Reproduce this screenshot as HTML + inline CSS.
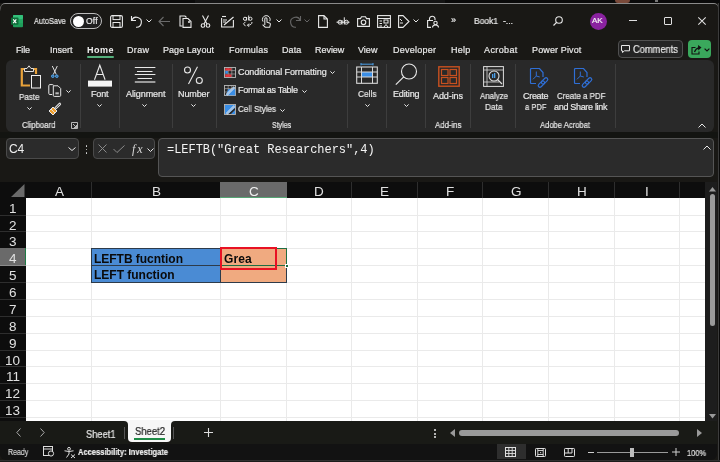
<!DOCTYPE html>
<html><head><meta charset="utf-8">
<style>
*{box-sizing:border-box;margin:0;padding:0}
html,body{width:720px;height:462px;overflow:hidden;background:#191815;font-family:"Liberation Sans",sans-serif;color:#e6e6e6;position:relative}
.a{position:absolute}
.t{position:absolute;white-space:nowrap;line-height:1;will-change:transform}
svg{position:absolute;overflow:visible}
</style></head><body>
<div class="a" style="left:0px;top:0px;width:720px;height:3px;background:#0a0a0a;"></div>
<div class="a" style="left:195px;top:0px;width:250px;height:3px;background:#141414;"></div>
<div class="a" style="left:615px;top:0px;width:15px;height:3px;background:#7a4a3a;border-radius:0 0 7px 7px"></div>
<div class="a" style="left:655px;top:0px;width:3px;height:2px;background:#777;"></div>
<div class="a" style="left:0px;top:132px;width:720px;height:6px;background:#131411;"></div>
<div class="a" style="left:0;top:3px;width:719px;height:12px;border-top:1px solid #8a8a8a;border-left:1px solid #6a6a6a;border-right:1px solid #6a6a6a;border-top-left-radius:5px;border-top-right-radius:5px;-webkit-mask-image:linear-gradient(#000 30%,transparent 70%)"></div>
<div class="a" style="left:718px;top:3px;width:1px;height:459px;background:#3c3c3c;"></div>
<div class="a" style="left:719px;top:0px;width:1px;height:462px;background:#0a0a0a;"></div>
<svg style="left:11px;top:14.5px" width="12" height="12.5" viewBox="0 0 12 12.5"><rect x="2" y="0" width="10" height="12.3" rx="1" fill="#1f9d5a"/>
<rect x="2" y="0" width="10" height="4" rx="1" fill="#33c07a"/>
<rect x="7" y="4" width="5" height="4.2" fill="#23a862"/>
<rect x="0" y="2.6" width="7.5" height="7.2" rx="0.8" fill="#0e6f3a"/>
<path d="M2.2 4.3 L5.3 8.1 M5.3 4.3 L2.2 8.1" stroke="#fff" stroke-width="1.1"/></svg>
<div class="a" style="left:70px;top:13px;width:32px;height:16px;border:1px solid #bdbdbd;border-radius:8px;background:#1f1f1f"></div>
<div class="a" style="left:72.5px;top:15.5px;width:11px;height:11px;border-radius:50%;background:#fff"></div>
<svg style="left:110px;top:15px" width="13" height="13" viewBox="0 0 13 13"><rect x="0.6" y="0.6" width="11.8" height="11.8" rx="1.5" fill="none" stroke="#e8e8e8" stroke-width="1.1"/><rect x="3" y="0.6" width="7" height="4" fill="none" stroke="#e8e8e8" stroke-width="1"/><rect x="3" y="7.5" width="7" height="5" fill="none" stroke="#e8e8e8" stroke-width="1"/></svg>
<svg style="left:130px;top:15px" width="13" height="13" viewBox="0 0 13 13"><path d="M1.5 1 V5.5 H6" fill="none" stroke="#e8e8e8" stroke-width="1.1"/><path d="M1.8 5.2 A5 5 0 1 1 6 12.2" fill="none" stroke="#e8e8e8" stroke-width="1.1"/></svg>
<svg style="left:146px;top:19px" width="6" height="4" viewBox="0 0 6 4"><path d="M0.5 0.5 L3 3 L5.5 0.5" fill="none" stroke="#e8e8e8" stroke-width="1"/></svg>
<svg style="left:158px;top:16px" width="13" height="11" viewBox="0 0 13 11"><path d="M12 5.5 H1 M5.5 1 L1 5.5 L5.5 10" fill="none" stroke="#6a6a6a" stroke-width="1.1"/></svg>
<svg style="left:179px;top:15px" width="13" height="13" viewBox="0 0 13 13"><path d="M3.5 11 H1 V1 H6 L7.5 2.5" fill="none" stroke="#e8e8e8" stroke-width="1.1"/><path d="M4 3.5 H9 L12 6.5 V12.4 H4 Z" fill="none" stroke="#e8e8e8" stroke-width="1.1"/><path d="M9 7 H11" stroke="#e8e8e8" stroke-width="1.4"/></svg>
<svg style="left:201px;top:15px" width="9" height="13" viewBox="0 0 9 13"><path d="M1.5 0.5 L6 9 M7.5 0.5 L3 9" fill="none" stroke="#e8e8e8" stroke-width="1.1"/><circle cx="2" cy="10.5" r="1.8" fill="none" stroke="#e8e8e8" stroke-width="1.1"/><circle cx="7" cy="10.5" r="1.8" fill="none" stroke="#e8e8e8" stroke-width="1.1"/></svg>
<svg style="left:221px;top:15px" width="13" height="13" viewBox="0 0 13 13"><path d="M0.6 3 V12 H12.4 V5" fill="none" stroke="#e8e8e8" stroke-width="1.1"/><path d="M2 5 H6 M2 7 H5 M3 10 L12.5 2" fill="none" stroke="#e8e8e8" stroke-width="1.1"/><path d="M1 1.5 H5" stroke="#e8e8e8" stroke-width="1.1"/></svg>
<svg style="left:236px;top:10px" width="20" height="20" viewBox="0 0 20 20"><g fill="none" stroke="#e8e8e8" stroke-width="1"><circle cx="9" cy="8.8" r="1.6"/><path d="M10.6 7 V10.5"/><path d="M12.7 5.5 V10.5"/><circle cx="14.4" cy="8.8" r="1.6"/><path d="M9.5 11.8 L7.5 13.8 L9.5 16.2"/><path d="M16 12 Q16 15.2 11.5 15.2 M13 13.6 L11.5 15.2 L13 16.8"/></g></svg>
<svg style="left:260px;top:14px" width="12" height="14" viewBox="0 0 12 14"><path d="M4.8 11 V4.8 A1.1 1.1 0 0 1 7 4.8 V8.2 L9.4 8.9 A1.4 1.4 0 0 1 10.4 10.5 L9.7 13.2 H5.2 L2.6 10.6" fill="none" stroke="#e8e8e8" stroke-width="1.05"/><path d="M3 7.6 A3.9 3.9 0 1 1 9.8 7.2" fill="none" stroke="#e8e8e8" stroke-width="1"/></svg>
<svg style="left:276px;top:19px" width="6" height="4" viewBox="0 0 6 4"><path d="M0.5 0.5 L3 3 L5.5 0.5" fill="none" stroke="#e8e8e8" stroke-width="1"/></svg>
<svg style="left:290px;top:15px" width="12" height="13" viewBox="0 0 12 13"><path d="M10.5 1 V5.5 H6" fill="none" stroke="#666" stroke-width="1.1"/><path d="M10.2 5.2 A5 5 0 1 0 6 12.2" fill="none" stroke="#666" stroke-width="1.1"/></svg>
<svg style="left:304px;top:19px" width="6" height="4" viewBox="0 0 6 4"><path d="M0.5 0.5 L3 3 L5.5 0.5" fill="none" stroke="#666" stroke-width="1"/></svg>
<svg style="left:318px;top:15px" width="10" height="13" viewBox="0 0 10 13"><path d="M0.6 0.6 H6 L9.4 4 V12.4 H0.6 Z M6 0.6 V4 H9.4" fill="none" stroke="#e8e8e8" stroke-width="1.1"/></svg>
<svg style="left:330px;top:10px" width="22" height="20" viewBox="0 0 22 20"><g fill="none" stroke="#e8e8e8" stroke-width="1"><circle cx="10" cy="12.2" r="2"/><path d="M12 10 V14.5"/><path d="M14.3 7.3 V14.5"/><circle cx="16.3" cy="12.2" r="2"/><path d="M6.5 12.2 H19.5"/></g></svg>
<svg style="left:357px;top:16px" width="13" height="11" viewBox="0 0 13 11"><path d="M0.6 2.6 H3.5 L4.5 0.8 H8.5 L9.5 2.6 H12.4 V10.4 H0.6 Z" fill="none" stroke="#e8e8e8" stroke-width="1.1"/><circle cx="6.5" cy="6.3" r="2.3" fill="none" stroke="#e8e8e8" stroke-width="1.1"/></svg>
<svg style="left:377px;top:15px" width="14" height="13" viewBox="0 0 14 13"><rect x="0.6" y="0.6" width="12.8" height="11.8" fill="none" stroke="#e8e8e8" stroke-width="1.1"/><path d="M0.6 3.5 H13.4 M2.5 6 H5 M2.5 8.5 H5 M2.5 11 H5" stroke="#e8e8e8" stroke-width="1"/><rect x="7" y="5" width="4" height="3" fill="none" stroke="#e8e8e8" stroke-width="1"/><path d="M7 12 L9 9.5 L11 12" fill="none" stroke="#e8e8e8" stroke-width="1"/></svg>
<svg style="left:398px;top:15px" width="12" height="13" viewBox="0 0 12 13"><path d="M0.6 0.6 H5 L11 6.5 L5 12.4 H0.6 Z" fill="none" stroke="#e8e8e8" stroke-width="1.1"/><path d="M2 4 L4 6 M2 8 H5" stroke="#e8e8e8" stroke-width="1"/></svg>
<svg style="left:413px;top:19px" width="6" height="4" viewBox="0 0 6 4"><path d="M0.5 0.5 L3 3 L5.5 0.5" fill="none" stroke="#e8e8e8" stroke-width="1"/></svg>
<svg style="left:427px;top:15px" width="12" height="13" viewBox="0 0 12 13"><path d="M2.5 5 V3.5 A2.8 2.8 0 0 1 8 3.5 V5" fill="none" stroke="#e8e8e8" stroke-width="1.1"/><path d="M4 12.4 H0.6 V5.5 H6" fill="none" stroke="#e8e8e8" stroke-width="1.1"/><circle cx="8.5" cy="8" r="1.7" fill="none" stroke="#e8e8e8" stroke-width="1.1"/><path d="M5.5 12.5 A3 2.5 0 0 1 11.5 12.5" fill="none" stroke="#e8e8e8" stroke-width="1.1"/></svg>
<svg style="left:553px;top:16px" width="10" height="10" viewBox="0 0 10 10"><circle cx="6" cy="4" r="3.3" fill="none" stroke="#e8e8e8" stroke-width="1.1"/><path d="M3.6 6.4 L0.5 9.5" stroke="#e8e8e8" stroke-width="1.2"/></svg>
<div class="a" style="left:589.5px;top:12.5px;width:17.5px;height:17.5px;border-radius:50%;background:#8a22a0"></div>
<div class="a" style="left:629px;top:20px;width:8px;height:1px;background:#e0e0e0;"></div>
<div class="a" style="left:664px;top:17px;width:7.5px;height:7.5px;border:1px solid #e0e0e0;border-radius:1px"></div>
<svg style="left:698px;top:17px" width="8" height="8" viewBox="0 0 8 8"><path d="M0.3 0.3 L7.7 7.7 M7.7 0.3 L0.3 7.7" stroke="#e0e0e0" stroke-width="1.05"/></svg>
<div class="a" style="left:87px;top:56px;width:27px;height:2px;background:#55b07c;border-radius:1px"></div>
<div class="a" style="left:617.5px;top:40px;width:65px;height:18px;border:1px solid #505050;border-radius:4px;background:#242424"></div>
<svg style="left:621px;top:45px" width="9" height="8" viewBox="0 0 9 8"><path d="M0.5 0.5 H8.5 V5.8 H3.5 L1.5 7.5 V5.8 H0.5 Z" fill="none" stroke="#e8e8e8" stroke-width="1"/></svg>
<div class="a" style="left:688px;top:40px;width:23px;height:18px;border-radius:4px;background:#3aa85c"></div>
<svg style="left:691px;top:43px" width="12" height="12" viewBox="0 0 12 12"><path d="M4.5 4.5 H1 V11 H8 V8.5" fill="none" stroke="#111" stroke-width="1.1"/><path d="M3.5 9 Q4.5 5.5 8 4.8" fill="none" stroke="#111" stroke-width="1.2"/><path d="M7 2 L10.5 4.6 L7.3 7.6 Z" fill="#111"/></svg>
<svg style="left:704px;top:48px" width="6" height="4" viewBox="0 0 6 4"><path d="M0.6 0.6 L3 3 L5.4 0.6" fill="none" stroke="#111" stroke-width="1.2"/></svg>
<div class="a" style="left:6px;top:60px;width:708px;height:72px;background:#292929;border-radius:6px"></div>
<div class="a" style="left:80px;top:64px;width:1px;height:64px;background:#3d3d3d;"></div>
<div class="a" style="left:119px;top:64px;width:1px;height:64px;background:#3d3d3d;"></div>
<div class="a" style="left:172px;top:64px;width:1px;height:64px;background:#3d3d3d;"></div>
<div class="a" style="left:216px;top:64px;width:1px;height:64px;background:#3d3d3d;"></div>
<div class="a" style="left:347px;top:64px;width:1px;height:64px;background:#3d3d3d;"></div>
<div class="a" style="left:386px;top:64px;width:1px;height:64px;background:#3d3d3d;"></div>
<div class="a" style="left:425px;top:64px;width:1px;height:64px;background:#3d3d3d;"></div>
<div class="a" style="left:470px;top:64px;width:1px;height:64px;background:#3d3d3d;"></div>
<div class="a" style="left:515px;top:64px;width:1px;height:64px;background:#3d3d3d;"></div>
<div class="a" style="left:615px;top:64px;width:1px;height:64px;background:#3d3d3d;"></div>
<svg style="left:20px;top:65px" width="22" height="24" viewBox="0 0 22 24"><path d="M6 4 H1.8 V20.5 H10 M12 4 H16 V9" fill="none" stroke="#e8a23a" stroke-width="2.2"/>
<path d="M4.5 6.5 V3.5 H7 L9 0.8 L11 3.5 H13.5 V6.5 Z" fill="#292929" stroke="#e0e0e0" stroke-width="1"/>
<rect x="11.5" y="10.5" width="9" height="12.5" fill="#292929" stroke="#f0f0f0" stroke-width="1"/></svg>
<svg style="left:27px;top:106.5px" width="5" height="3" viewBox="0 0 5 3"><path d="M0.4 0.4 L2.5 2.5 L4.6 0.4" fill="none" stroke="#e8e8e8" stroke-width="1"/></svg>
<svg style="left:50px;top:65px" width="10" height="13" viewBox="0 0 10 13"><path d="M2.3 1 L6.3 9.5 M7.3 1 L3.3 9.5" stroke="#e0e0e0" stroke-width="1"/><circle cx="2.8" cy="11.2" r="1.3" fill="#4ca0e8" stroke="#4ca0e8" stroke-width="1"/><circle cx="6.8" cy="11.2" r="1.3" fill="#4ca0e8" stroke="#4ca0e8" stroke-width="1"/><circle cx="2.8" cy="11.2" r="0.5" fill="#292929"/><circle cx="6.8" cy="11.2" r="0.5" fill="#292929"/></svg>
<svg style="left:48px;top:84px" width="14" height="13" viewBox="0 0 14 13"><path d="M4.2 10.5 H1.8 Q0.8 10.5 0.8 9.5 V1.6 Q0.8 0.6 1.8 0.6 H4.5 Q5.4 0.6 5.4 1.4" fill="none" stroke="#e8e8e8" stroke-width="1"/><path d="M5.3 1.8 H10 L12.7 4.5 V11.4 Q12.7 12.4 11.7 12.4 H6.3 Q5.3 12.4 5.3 11.4 Z" fill="none" stroke="#e8e8e8" stroke-width="1"/><rect x="7.4" y="8.3" width="3.4" height="2" fill="#bbb"/></svg>
<svg style="left:65.5px;top:89.5px" width="5" height="3" viewBox="0 0 5 3"><path d="M0.4 0.4 L2.5 2.5 L4.6 0.4" fill="none" stroke="#e8e8e8" stroke-width="1"/></svg>
<svg style="left:48px;top:102px" width="13" height="13" viewBox="0 0 13 13"><path d="M7.6 6.2 L11.8 2" stroke="#e8e8e8" stroke-width="2.6" stroke-linecap="round"/><path d="M7.6 6.2 L11.8 2" stroke="#292929" stroke-width="0.9" stroke-linecap="round"/><path d="M1 9 L5 5 L9 9 L5 13 Z" fill="#f0a030" stroke="#e8e8e8" stroke-width="1" stroke-linejoin="round"/><path d="M3 7 L7 11" stroke="#e8e8e8" stroke-width="0.9"/><path d="M1 9 L3 7 L7 11 L5 13 Z" fill="#292929" opacity="0.0"/></svg>
<svg style="left:71px;top:122px" width="7" height="7" viewBox="0 0 7 7"><path d="M0.5 6.5 V0.5 H6.5 V6.5 Z" fill="none" stroke="#ccc" stroke-width="0.9"/><path d="M2 2 L5.5 5.5 M3 5.5 H5.5 V3" fill="none" stroke="#ccc" stroke-width="0.9"/></svg>
<svg style="left:87px;top:64px" width="26" height="23" viewBox="0 0 26 23"><path d="M7.5 15.8 L12.8 1.2 L18.1 15.8 M9.2 10.5 H16.4" fill="none" stroke="#e8e8e8" stroke-width="1.1"/><rect x="1" y="16.6" width="24" height="6" fill="#f4f4f4"/></svg>
<svg style="left:97px;top:104px" width="5" height="3" viewBox="0 0 5 3"><path d="M0.4 0.4 L2.5 2.5 L4.6 0.4" fill="none" stroke="#e8e8e8" stroke-width="1"/></svg>
<svg style="left:134px;top:66px" width="22" height="17" viewBox="0 0 22 17"><path d="M0.8 1.5 H21.4 M3 5.5 H18.5 M0.8 8.5 H21.4 M3.5 12.5 H18 " stroke="#e8e8e8" stroke-width="1"/><path d="M0.8 16 H21.4" stroke="#9a9a9a" stroke-width="2"/></svg>
<svg style="left:142px;top:104px" width="5" height="3" viewBox="0 0 5 3"><path d="M0.4 0.4 L2.5 2.5 L4.6 0.4" fill="none" stroke="#e8e8e8" stroke-width="1"/></svg>
<svg style="left:183px;top:66px" width="21" height="19" viewBox="0 0 21 19"><circle cx="4.5" cy="4" r="3" fill="none" stroke="#e8e8e8" stroke-width="1.1"/><circle cx="16.3" cy="14.5" r="3" fill="none" stroke="#e8e8e8" stroke-width="1.1"/><path d="M14.5 0.8 L5.5 18" stroke="#e8e8e8" stroke-width="1.1"/></svg>
<svg style="left:190.5px;top:104px" width="5" height="3" viewBox="0 0 5 3"><path d="M0.4 0.4 L2.5 2.5 L4.6 0.4" fill="none" stroke="#e8e8e8" stroke-width="1"/></svg>
<svg style="left:224px;top:66.5px" width="12" height="11" viewBox="0 0 12 11"><rect x="0.5" y="0.5" width="11" height="10" fill="none" stroke="#b8b8b8" stroke-width="0.9"/><path d="M4.2 0.5 V10.5 M7.8 0.5 V10.5 M0.5 3.6 H11.5 M0.5 7 H11.5" stroke="#b8b8b8" stroke-width="0.6"/><rect x="1.2" y="1.2" width="6.2" height="2.2" fill="#e8333a"/><rect x="1.2" y="4" width="2.7" height="2.6" fill="#3a8ee6"/><rect x="1.2" y="7.4" width="6.2" height="2.5" fill="#e8333a"/></svg>
<svg style="left:330px;top:71px" width="5" height="3" viewBox="0 0 5 3"><path d="M0.4 0.4 L2.5 2.5 L4.6 0.4" fill="none" stroke="#e8e8e8" stroke-width="1"/></svg>
<svg style="left:224px;top:85px" width="12" height="11" viewBox="0 0 12 11"><rect x="0.5" y="0.5" width="11" height="10" fill="none" stroke="#b8b8b8" stroke-width="0.9"/><path d="M4.2 0.5 V10.5 M7.8 0.5 V10.5 M0.5 3.6 H11.5 M0.5 7 H11.5" stroke="#b8b8b8" stroke-width="0.6"/><path d="M4.2 4 H11.2 V10.2 H2 Z" fill="#3a8ee6"/><path d="M2.5 10 L10.5 2" stroke="#e8e8e8" stroke-width="2.2"/><path d="M2.5 10 L10.5 2" stroke="#3a8ee6" stroke-width="0.8"/></svg>
<svg style="left:301.5px;top:89.5px" width="5" height="3" viewBox="0 0 5 3"><path d="M0.4 0.4 L2.5 2.5 L4.6 0.4" fill="none" stroke="#e8e8e8" stroke-width="1"/></svg>
<svg style="left:224px;top:104px" width="12" height="11" viewBox="0 0 12 11"><rect x="0.5" y="0.5" width="11" height="10" fill="none" stroke="#b8b8b8" stroke-width="0.9"/><path d="M1 1 H11 V4 L4 10 H1 Z" fill="#3a8ee6"/><path d="M7 10 L11 6 V10 Z" fill="#3a8ee6"/><path d="M2.5 10 L10.5 2" stroke="#e8e8e8" stroke-width="2.2"/><path d="M2.5 10 L10.5 2" stroke="#3a8ee6" stroke-width="0.8"/></svg>
<svg style="left:279.5px;top:108.5px" width="5" height="3" viewBox="0 0 5 3"><path d="M0.4 0.4 L2.5 2.5 L4.6 0.4" fill="none" stroke="#e8e8e8" stroke-width="1"/></svg>
<svg style="left:356px;top:63px" width="22" height="21" viewBox="0 0 22 21"><path d="M5 1.2 H17 M5 0 V2.4 M17 0 V2.4" stroke="#4ca0e8" stroke-width="1"/><rect x="5.5" y="9" width="11" height="5" fill="#3a8ee6"/><rect x="0.7" y="4" width="20.6" height="16.3" fill="none" stroke="#d8d8d8" stroke-width="1.1"/><path d="M0.7 9 H21.3 M0.7 14 H21.3 M5.5 4 V20.3 M16.5 4 V20.3" stroke="#d8d8d8" stroke-width="1"/></svg>
<svg style="left:365px;top:104px" width="5" height="3" viewBox="0 0 5 3"><path d="M0.4 0.4 L2.5 2.5 L4.6 0.4" fill="none" stroke="#e8e8e8" stroke-width="1"/></svg>
<svg style="left:395px;top:63px" width="23" height="23" viewBox="0 0 23 23"><circle cx="14" cy="8.5" r="7.5" fill="none" stroke="#e8e8e8" stroke-width="1.1"/><path d="M8.7 13.8 L0.8 21.7" stroke="#e8e8e8" stroke-width="1.2"/></svg>
<svg style="left:403.5px;top:104px" width="5" height="3" viewBox="0 0 5 3"><path d="M0.4 0.4 L2.5 2.5 L4.6 0.4" fill="none" stroke="#e8e8e8" stroke-width="1"/></svg>
<svg style="left:438px;top:66px" width="22" height="21" viewBox="0 0 22 21"><rect x="0.8" y="0.8" width="20.4" height="19.4" fill="none" stroke="#c8501f" stroke-width="1.4"/><rect x="3.5" y="3.5" width="6.5" height="6" fill="none" stroke="#c8501f" stroke-width="1.2"/><rect x="12" y="3.5" width="6.5" height="6" fill="none" stroke="#c8501f" stroke-width="1.2"/><rect x="3.5" y="11.5" width="6.5" height="6" fill="none" stroke="#c8501f" stroke-width="1.2"/><rect x="12" y="11.5" width="6.5" height="6" fill="none" stroke="#c8501f" stroke-width="1.2"/></svg>
<svg style="left:483px;top:66px" width="21" height="21" viewBox="0 0 21 21"><rect x="0.6" y="0.6" width="19.8" height="19.8" fill="none" stroke="#ddd" stroke-width="1"/><path d="M0.6 4 H20.4 M4 0.6 V20.4 M0.6 16 H16" stroke="#ddd" stroke-width="0.8"/><circle cx="11" cy="10" r="5" fill="none" stroke="#ddd" stroke-width="1.1"/><rect x="9" y="8" width="1.3" height="4" fill="#4ca0e8"/><rect x="11" y="7" width="1.3" height="5" fill="#4ca0e8"/><path d="M14.5 13.5 L19 18" stroke="#ddd" stroke-width="1.3"/></svg>
<svg style="left:529px;top:68px" width="22" height="22" viewBox="0 0 22 22"><path d="M7 15.5 H2.5 Q1.5 15.5 1.5 14.5 V1.5 Q1.5 0.5 2.5 0.5 H10.5 L14 4.5 V9" fill="none" stroke="#2f6fd6" stroke-width="1.2"/><path d="M7.3 3.5 V8 L4 11.3 M7.3 8 L10.8 9" fill="none" stroke="#2f6fd6" stroke-width="1"/><g transform="rotate(-45 14 14.5)" fill="none" stroke="#2f6fd6" stroke-width="1.2"><rect x="8" y="12.8" width="7.5" height="3.4" rx="1.7"/><rect x="12.5" y="12.8" width="7.5" height="3.4" rx="1.7"/></g></svg>
<svg style="left:573px;top:68px" width="22" height="22" viewBox="0 0 22 22"><path d="M7 15.5 H2.5 Q1.5 15.5 1.5 14.5 V1.5 Q1.5 0.5 2.5 0.5 H10.5 L14 4.5 V9" fill="none" stroke="#2f6fd6" stroke-width="1.2"/><path d="M7.3 3.5 V8 L4 11.3 M7.3 8 L10.8 9" fill="none" stroke="#2f6fd6" stroke-width="1"/><g transform="rotate(-45 14 14.5)" fill="none" stroke="#2f6fd6" stroke-width="1.2"><rect x="8" y="12.8" width="7.5" height="3.4" rx="1.7"/><rect x="12.5" y="12.8" width="7.5" height="3.4" rx="1.7"/></g></svg>
<svg style="left:698px;top:123px" width="8" height="5" viewBox="0 0 8 5"><path d="M0.5 4.5 L4 1 L7.5 4.5" fill="none" stroke="#e8e8e8" stroke-width="1"/></svg>
<div class="a" style="left:6px;top:138px;width:73px;height:21px;background:#2b2b2b;border:1px solid #4a4a4a;border-radius:4px"></div>
<svg style="left:67.5px;top:147px" width="8" height="4" viewBox="0 0 8 4"><path d="M0.5 0.5 L4 3.5 L7.5 0.5" fill="none" stroke="#e8e8e8" stroke-width="1"/></svg>
<div class="a" style="left:85.5px;top:145px;width:1.6px;height:1.6px;background:#dcdcdc;border-radius:50%"></div>
<div class="a" style="left:85.5px;top:148.5px;width:1.6px;height:1.6px;background:#dcdcdc;border-radius:50%"></div>
<div class="a" style="left:85.5px;top:152px;width:1.6px;height:1.6px;background:#dcdcdc;border-radius:50%"></div>
<div class="a" style="left:93px;top:138px;width:62px;height:21px;background:#2b2b2b;border:1px solid #4a4a4a;border-radius:4px"></div>
<svg style="left:98px;top:144px" width="9" height="9" viewBox="0 0 9 9"><path d="M0.5 0.5 L8.5 8.5 M8.5 0.5 L0.5 8.5" stroke="#8a8a8a" stroke-width="1"/></svg>
<svg style="left:113px;top:145px" width="12" height="8" viewBox="0 0 12 8"><path d="M0.5 4 L4 7.5 L11.5 0.5" fill="none" stroke="#8a8a8a" stroke-width="1"/></svg>
<svg style="left:147px;top:147.5px" width="7" height="4" viewBox="0 0 7 4"><path d="M0.5 0.5 L3.5 3.5 L6.5 0.5" fill="none" stroke="#e8e8e8" stroke-width="1"/></svg>
<div class="a" style="left:158px;top:138px;width:556px;height:39px;background:#2b2b2b;border:1px solid #555;border-radius:4px"></div>
<svg style="left:703px;top:145px" width="8" height="5" viewBox="0 0 8 5"><path d="M0.5 4.5 L4 1 L7.5 4.5" fill="none" stroke="#e8e8e8" stroke-width="1"/></svg>
<div class="a" style="left:0px;top:182px;width:705px;height:16px;background:#0d0d0d;"></div>
<div class="a" style="left:705px;top:182px;width:12px;height:239px;background:#1d1d1d;"></div>
<div class="a" style="left:0px;top:198px;width:26px;height:223px;background:#0d0d0d;"></div>
<div class="a" style="left:26px;top:197.5px;width:679px;height:223.5px;background:#ffffff;"></div>
<svg style="left:11px;top:184px" width="14" height="13" viewBox="0 0 14 13"><path d="M13.5 0 V13 H0 Z" fill="#6a6a6a"/></svg>
<div class="a" style="left:91px;top:182px;width:1px;height:16px;background:#2e2e2e;"></div>
<div class="a" style="left:220px;top:182px;width:1px;height:16px;background:#2e2e2e;"></div>
<div class="a" style="left:286px;top:182px;width:1px;height:16px;background:#2e2e2e;"></div>
<div class="a" style="left:351px;top:182px;width:1px;height:16px;background:#2e2e2e;"></div>
<div class="a" style="left:417px;top:182px;width:1px;height:16px;background:#2e2e2e;"></div>
<div class="a" style="left:482px;top:182px;width:1px;height:16px;background:#2e2e2e;"></div>
<div class="a" style="left:548px;top:182px;width:1px;height:16px;background:#2e2e2e;"></div>
<div class="a" style="left:614px;top:182px;width:1px;height:16px;background:#2e2e2e;"></div>
<div class="a" style="left:679px;top:182px;width:1px;height:16px;background:#2e2e2e;"></div>
<div class="a" style="left:0px;top:215px;width:26px;height:1px;background:#2e2e2e;"></div>
<div class="a" style="left:0px;top:231px;width:26px;height:1px;background:#2e2e2e;"></div>
<div class="a" style="left:0px;top:248px;width:26px;height:1px;background:#2e2e2e;"></div>
<div class="a" style="left:0px;top:265px;width:26px;height:1px;background:#2e2e2e;"></div>
<div class="a" style="left:0px;top:282px;width:26px;height:1px;background:#2e2e2e;"></div>
<div class="a" style="left:0px;top:299px;width:26px;height:1px;background:#2e2e2e;"></div>
<div class="a" style="left:0px;top:316px;width:26px;height:1px;background:#2e2e2e;"></div>
<div class="a" style="left:0px;top:333px;width:26px;height:1px;background:#2e2e2e;"></div>
<div class="a" style="left:0px;top:350px;width:26px;height:1px;background:#2e2e2e;"></div>
<div class="a" style="left:0px;top:366px;width:26px;height:1px;background:#2e2e2e;"></div>
<div class="a" style="left:0px;top:383px;width:26px;height:1px;background:#2e2e2e;"></div>
<div class="a" style="left:0px;top:400px;width:26px;height:1px;background:#2e2e2e;"></div>
<div class="a" style="left:0px;top:417px;width:26px;height:1px;background:#2e2e2e;"></div>
<div class="a" style="left:91px;top:198px;width:1px;height:223px;background:#eaeaea;"></div>
<div class="a" style="left:220px;top:198px;width:1px;height:223px;background:#eaeaea;"></div>
<div class="a" style="left:286px;top:198px;width:1px;height:223px;background:#eaeaea;"></div>
<div class="a" style="left:351px;top:198px;width:1px;height:223px;background:#eaeaea;"></div>
<div class="a" style="left:417px;top:198px;width:1px;height:223px;background:#eaeaea;"></div>
<div class="a" style="left:482px;top:198px;width:1px;height:223px;background:#eaeaea;"></div>
<div class="a" style="left:548px;top:198px;width:1px;height:223px;background:#eaeaea;"></div>
<div class="a" style="left:614px;top:198px;width:1px;height:223px;background:#eaeaea;"></div>
<div class="a" style="left:679px;top:198px;width:1px;height:223px;background:#eaeaea;"></div>
<div class="a" style="left:26px;top:215px;width:679px;height:1px;background:#eaeaea;"></div>
<div class="a" style="left:26px;top:231px;width:679px;height:1px;background:#eaeaea;"></div>
<div class="a" style="left:26px;top:248px;width:679px;height:1px;background:#eaeaea;"></div>
<div class="a" style="left:26px;top:265px;width:679px;height:1px;background:#eaeaea;"></div>
<div class="a" style="left:26px;top:282px;width:679px;height:1px;background:#eaeaea;"></div>
<div class="a" style="left:26px;top:299px;width:679px;height:1px;background:#eaeaea;"></div>
<div class="a" style="left:26px;top:316px;width:679px;height:1px;background:#eaeaea;"></div>
<div class="a" style="left:26px;top:333px;width:679px;height:1px;background:#eaeaea;"></div>
<div class="a" style="left:26px;top:350px;width:679px;height:1px;background:#eaeaea;"></div>
<div class="a" style="left:26px;top:366px;width:679px;height:1px;background:#eaeaea;"></div>
<div class="a" style="left:26px;top:383px;width:679px;height:1px;background:#eaeaea;"></div>
<div class="a" style="left:26px;top:400px;width:679px;height:1px;background:#eaeaea;"></div>
<div class="a" style="left:26px;top:417px;width:679px;height:1px;background:#eaeaea;"></div>
<div class="a" style="left:220px;top:182px;width:66.5px;height:16px;background:#6a6a6a;"></div>
<div class="a" style="left:220px;top:196.5px;width:66.5px;height:1.5px;background:#56a474;"></div>
<div class="a" style="left:0px;top:248px;width:26px;height:17px;background:#6a6a6a;"></div>
<div class="a" style="left:0px;top:264.5px;width:26px;height:1px;background:#8a8a8a;"></div>
<div class="a" style="left:24.5px;top:248px;width:1.5px;height:17px;background:#1e7a45;"></div>
<div class="a" style="left:92px;top:248px;width:128px;height:34px;background:#4a8bd4;"></div>
<div class="a" style="left:220px;top:248px;width:66px;height:34px;background:#f0aa80;"></div>
<div class="a" style="left:91px;top:248px;width:196px;height:35px;border:1px solid #2d3b4a"></div>
<div class="a" style="left:91px;top:265px;width:196px;height:1px;background:#2d3b4a;"></div>
<div class="a" style="left:220px;top:248px;width:1px;height:35px;background:#2d3b4a;"></div>
<div class="a" style="left:220px;top:248px;width:67px;height:18px;border:1.5px solid #1f6e43"></div>
<div class="a" style="left:284.5px;top:263.5px;width:4px;height:4px;background:#1f6e43;border:1px solid #fff"></div>
<div class="a" style="left:220px;top:246.5px;width:57px;height:23px;border:2px solid #e81123"></div>
<svg style="left:709px;top:187px" width="7" height="5" viewBox="0 0 7 5"><path d="M3.5 0 L7 4.5 H0 Z" fill="#9a9a9a"/></svg>
<div class="a" style="left:709.5px;top:194px;width:5.5px;height:132px;background:#9a9a9a;border-radius:3px"></div>
<svg style="left:709px;top:414px" width="7" height="5" viewBox="0 0 7 5"><path d="M0 0 H7 L3.5 4.5 Z" fill="#9a9a9a"/></svg>
<div class="a" style="left:120px;top:420px;width:60px;height:6px;background:#f7f7f7;"></div>
<div class="a" style="left:0px;top:421px;width:127.5px;height:23px;background:#191a16;border-top-right-radius:4px"></div>
<div class="a" style="left:171px;top:421px;width:546px;height:23px;background:#191a16;border-top-left-radius:4px"></div>
<svg style="left:16px;top:428px" width="5" height="9" viewBox="0 0 5 9"><path d="M4.5 0.5 L0.8 4.5 L4.5 8.5" fill="none" stroke="#aaa" stroke-width="1"/></svg>
<svg style="left:40px;top:428px" width="5" height="9" viewBox="0 0 5 9"><path d="M0.5 0.5 L4.2 4.5 L0.5 8.5" fill="none" stroke="#aaa" stroke-width="1"/></svg>
<div class="a" style="left:124px;top:427px;width:1px;height:12px;background:#555;"></div>
<div class="a" style="left:127.5px;top:421px;width:43.5px;height:21px;background:#f7f7f7;border-bottom-left-radius:4px;border-bottom-right-radius:4px"></div>
<div class="a" style="left:134px;top:438px;width:31px;height:2px;background:#1e8a46;"></div>
<div class="a" style="left:173px;top:427px;width:1px;height:12px;background:#555;"></div>
<svg style="left:204px;top:428px" width="9" height="9" viewBox="0 0 9 9"><path d="M4.5 0 V9 M0 4.5 H9" stroke="#ddd" stroke-width="1.1"/></svg>
<div class="a" style="left:433.5px;top:429px;width:2px;height:2px;background:#e8e8e8;border-radius:50%"></div>
<div class="a" style="left:433.5px;top:432.5px;width:2px;height:2px;background:#e8e8e8;border-radius:50%"></div>
<div class="a" style="left:433.5px;top:436px;width:2px;height:2px;background:#e8e8e8;border-radius:50%"></div>
<svg style="left:450px;top:428.5px" width="5" height="8" viewBox="0 0 5 8"><path d="M5 0 V8 L0 4 Z" fill="#9a9a9a"/></svg>
<div class="a" style="left:458.5px;top:429.8px;width:220px;height:6px;background:#9a9a9a;border-radius:3px"></div>
<svg style="left:697px;top:428.5px" width="5" height="8" viewBox="0 0 5 8"><path d="M0 0 V8 L5 4 Z" fill="#9a9a9a"/></svg>
<div class="a" style="left:0px;top:444px;width:717px;height:16px;background:#121212;border-bottom-left-radius:6px;border-bottom-right-radius:6px"></div>
<div class="a" style="left:0px;top:460px;width:720px;height:1px;background:#303030;"></div>
<div class="a" style="left:0px;top:461px;width:720px;height:1px;background:#1c1c1c;"></div>
<svg style="left:43px;top:446px" width="12" height="11" viewBox="0 0 12 11"><rect x="0.5" y="0.5" width="9" height="9" fill="none" stroke="#ddd" stroke-width="1"/><path d="M0.5 3 H9.5" stroke="#ddd" stroke-width="1"/><circle cx="8" cy="7.5" r="2.6" fill="#141414" stroke="#ddd" stroke-width="1"/></svg>
<svg style="left:64px;top:447px" width="12" height="11" viewBox="0 0 12 11"><circle cx="5" cy="1.8" r="1.4" fill="none" stroke="#ddd" stroke-width="1"/><path d="M0.5 3.8 Q5 5.2 9.5 3.8 M5 4.6 V7 L2.5 10.5" fill="none" stroke="#ddd" stroke-width="1"/><path d="M7 7.5 L11 11 M11 7.5 L7 11" stroke="#ddd" stroke-width="1"/></svg>
<div class="a" style="left:497px;top:444px;width:29px;height:15px;background:#2e2e2e;"></div>
<svg style="left:505px;top:447px" width="11" height="10" viewBox="0 0 11 10"><rect x="0.5" y="0.5" width="10" height="9" fill="none" stroke="#e0e0e0" stroke-width="1"/><path d="M0.5 3.5 H10.5 M0.5 6.5 H10.5 M3.8 0.5 V9.5 M7.2 0.5 V9.5" stroke="#e0e0e0" stroke-width="0.9"/></svg>
<svg style="left:535px;top:448px" width="11" height="9" viewBox="0 0 11 9"><rect x="0.5" y="0.5" width="10" height="8" rx="0.8" fill="none" stroke="#e0e0e0" stroke-width="1"/><path d="M2.8 0.5 V8.5 M8.2 0.5 V8.5 M2.8 2.5 H8.2 M2.8 6.5 H8.2" stroke="#e0e0e0" stroke-width="0.9"/><rect x="5" y="4" width="1.2" height="1.2" fill="#bbb"/></svg>
<svg style="left:564px;top:448px" width="11" height="9" viewBox="0 0 11 9"><rect x="0.5" y="0.5" width="10" height="8" rx="0.8" fill="none" stroke="#e0e0e0" stroke-width="1"/><path d="M0.5 5 H8 V0.5 M4.2 0.5 V5" fill="none" stroke="#e0e0e0" stroke-width="1"/></svg>
<div class="a" style="left:588px;top:451.5px;width:6px;height:1px;background:#cfcfcf;"></div>
<div class="a" style="left:597px;top:451.5px;width:71px;height:1.2px;background:#9a9a9a;"></div>
<div class="a" style="left:630px;top:447.5px;width:4px;height:9px;background:#bdbdbd;"></div>
<svg style="left:671.5px;top:448px" width="8" height="8" viewBox="0 0 8 8"><path d="M4 0 V8 M0 4 H8" stroke="#cfcfcf" stroke-width="1"/></svg>
<div class="t" id="t0" style="left:34px;top:17px;font-size:8.5px;font-weight:400;color:#eaeaea;font-family:'Liberation Sans',sans-serif;transform:scaleX(0.8569);transform-origin:0 0;-webkit-text-stroke:0.2px #eaeaea;">AutoSave</div>
<div class="t" id="t1" style="left:86px;top:17px;font-size:8.5px;font-weight:400;color:#eaeaea;font-family:'Liberation Sans',sans-serif;letter-spacing:0.156px;-webkit-text-stroke:0.2px #eaeaea;">Off</div>
<div class="t" id="t2" style="left:451px;top:16px;font-size:9px;font-weight:400;color:#eaeaea;font-family:'Liberation Sans',sans-serif;-webkit-text-stroke:0.2px #eaeaea;">&#187;</div>
<div class="t" id="t3" style="left:474px;top:17px;font-size:9px;font-weight:400;color:#eaeaea;font-family:'Liberation Sans',sans-serif;transform:scaleX(0.9400);transform-origin:0 0;-webkit-text-stroke:0.2px #eaeaea;">Book1</div>
<div class="t" id="t4" style="left:503px;top:17px;font-size:9px;font-weight:400;color:#eaeaea;font-family:'Liberation Sans',sans-serif;letter-spacing:-0.167px;-webkit-text-stroke:0.2px #eaeaea;">-...</div>
<div class="t" id="t5" style="left:592px;top:17px;font-size:8px;font-weight:400;color:#f4f4f4;font-family:'Liberation Sans',sans-serif;letter-spacing:-0.172px;-webkit-text-stroke:0.2px #f4f4f4;">AK</div>
<div class="t" id="t6" style="left:16px;top:46px;font-size:9px;font-weight:400;color:#e8e8e8;font-family:'Liberation Sans',sans-serif;letter-spacing:-0.172px;-webkit-text-stroke:0.2px #e8e8e8;">File</div>
<div class="t" id="t7" style="left:50px;top:46px;font-size:9px;font-weight:400;color:#e8e8e8;font-family:'Liberation Sans',sans-serif;letter-spacing:-0.003px;-webkit-text-stroke:0.2px #e8e8e8;">Insert</div>
<div class="t" id="t8" style="left:87px;top:46px;font-size:9px;font-weight:700;color:#f0f0f0;font-family:'Liberation Sans',sans-serif;letter-spacing:0.495px;">Home</div>
<div class="t" id="t9" style="left:127px;top:46px;font-size:9px;font-weight:400;color:#e8e8e8;font-family:'Liberation Sans',sans-serif;letter-spacing:0.328px;-webkit-text-stroke:0.2px #e8e8e8;">Draw</div>
<div class="t" id="t10" style="left:163px;top:46px;font-size:9px;font-weight:400;color:#e8e8e8;font-family:'Liberation Sans',sans-serif;letter-spacing:0.045px;-webkit-text-stroke:0.2px #e8e8e8;">Page Layout</div>
<div class="t" id="t11" style="left:229px;top:46px;font-size:9px;font-weight:400;color:#e8e8e8;font-family:'Liberation Sans',sans-serif;letter-spacing:0.212px;-webkit-text-stroke:0.2px #e8e8e8;">Formulas</div>
<div class="t" id="t12" style="left:282px;top:46px;font-size:9px;font-weight:400;color:#e8e8e8;font-family:'Liberation Sans',sans-serif;letter-spacing:0.095px;-webkit-text-stroke:0.2px #e8e8e8;">Data</div>
<div class="t" id="t13" style="left:315px;top:46px;font-size:9px;font-weight:400;color:#e8e8e8;font-family:'Liberation Sans',sans-serif;letter-spacing:-0.043px;-webkit-text-stroke:0.2px #e8e8e8;">Review</div>
<div class="t" id="t14" style="left:358px;top:46px;font-size:9px;font-weight:400;color:#e8e8e8;font-family:'Liberation Sans',sans-serif;letter-spacing:0.014px;-webkit-text-stroke:0.2px #e8e8e8;">View</div>
<div class="t" id="t15" style="left:393px;top:46px;font-size:9px;font-weight:400;color:#e8e8e8;font-family:'Liberation Sans',sans-serif;letter-spacing:0.246px;-webkit-text-stroke:0.2px #e8e8e8;">Developer</div>
<div class="t" id="t16" style="left:451px;top:46px;font-size:9px;font-weight:400;color:#e8e8e8;font-family:'Liberation Sans',sans-serif;letter-spacing:0.261px;-webkit-text-stroke:0.2px #e8e8e8;">Help</div>
<div class="t" id="t17" style="left:484px;top:46px;font-size:9px;font-weight:400;color:#e8e8e8;font-family:'Liberation Sans',sans-serif;letter-spacing:0.378px;-webkit-text-stroke:0.2px #e8e8e8;">Acrobat</div>
<div class="t" id="t18" style="left:532px;top:46px;font-size:9px;font-weight:400;color:#e8e8e8;font-family:'Liberation Sans',sans-serif;letter-spacing:0.127px;-webkit-text-stroke:0.2px #e8e8e8;">Power Pivot</div>
<div class="t" id="t19" style="left:633px;top:45px;font-size:10px;font-weight:400;color:#e8e8e8;font-family:'Liberation Sans',sans-serif;transform:scaleX(0.9305);transform-origin:0 0;-webkit-text-stroke:0.2px #e8e8e8;">Comments</div>
<div class="t" id="t20" style="left:19px;top:93px;font-size:9px;font-weight:400;color:#e8e8e8;font-family:'Liberation Sans',sans-serif;transform:scaleX(0.8907);transform-origin:0 0;-webkit-text-stroke:0.2px #e8e8e8;">Paste</div>
<div class="t" id="t21" style="left:22px;top:121px;font-size:8.5px;font-weight:400;color:#e8e8e8;font-family:'Liberation Sans',sans-serif;transform:scaleX(0.9206);transform-origin:0 0;-webkit-text-stroke:0.2px #e8e8e8;">Clipboard</div>
<div class="t" id="t22" style="left:91px;top:90px;font-size:9px;font-weight:400;color:#e8e8e8;font-family:'Liberation Sans',sans-serif;letter-spacing:-0.172px;-webkit-text-stroke:0.2px #e8e8e8;">Font</div>
<div class="t" id="t23" style="left:126px;top:90px;font-size:9px;font-weight:400;color:#e8e8e8;font-family:'Liberation Sans',sans-serif;letter-spacing:-0.066px;-webkit-text-stroke:0.2px #e8e8e8;">Alignment</div>
<div class="t" id="t24" style="left:178px;top:90px;font-size:9px;font-weight:400;color:#e8e8e8;font-family:'Liberation Sans',sans-serif;letter-spacing:-0.103px;-webkit-text-stroke:0.2px #e8e8e8;">Number</div>
<div class="t" id="t25" style="left:238px;top:68px;font-size:9px;font-weight:400;color:#e8e8e8;font-family:'Liberation Sans',sans-serif;letter-spacing:-0.088px;-webkit-text-stroke:0.2px #e8e8e8;">Conditional Formatting</div>
<div class="t" id="t26" style="left:238px;top:86px;font-size:9px;font-weight:400;color:#e8e8e8;font-family:'Liberation Sans',sans-serif;letter-spacing:-0.312px;-webkit-text-stroke:0.2px #e8e8e8;">Format as Table</div>
<div class="t" id="t27" style="left:238px;top:105px;font-size:9px;font-weight:400;color:#e8e8e8;font-family:'Liberation Sans',sans-serif;transform:scaleX(0.8938);transform-origin:0 0;-webkit-text-stroke:0.2px #e8e8e8;">Cell Styles</div>
<div class="t" id="t28" style="left:272px;top:121px;font-size:8.5px;font-weight:400;color:#e8e8e8;font-family:'Liberation Sans',sans-serif;transform:scaleX(0.8205);transform-origin:0 0;-webkit-text-stroke:0.2px #e8e8e8;">Styles</div>
<div class="t" id="t29" style="left:358px;top:90px;font-size:9px;font-weight:400;color:#e8e8e8;font-family:'Liberation Sans',sans-serif;transform:scaleX(0.9243);transform-origin:0 0;-webkit-text-stroke:0.2px #e8e8e8;">Cells</div>
<div class="t" id="t30" style="left:393px;top:90px;font-size:9px;font-weight:400;color:#e8e8e8;font-family:'Liberation Sans',sans-serif;letter-spacing:-0.172px;-webkit-text-stroke:0.2px #e8e8e8;">Editing</div>
<div class="t" id="t31" style="left:433px;top:92px;font-size:9px;font-weight:400;color:#e8e8e8;font-family:'Liberation Sans',sans-serif;letter-spacing:-0.086px;-webkit-text-stroke:0.2px #e8e8e8;">Add-ins</div>
<div class="t" id="t32" style="left:435px;top:121px;font-size:8.5px;font-weight:400;color:#e8e8e8;font-family:'Liberation Sans',sans-serif;transform:scaleX(0.9192);transform-origin:0 0;-webkit-text-stroke:0.2px #e8e8e8;">Add-ins</div>
<div class="t" id="t33" style="left:480px;top:92px;font-size:9px;font-weight:400;color:#e8e8e8;font-family:'Liberation Sans',sans-serif;transform:scaleX(0.8741);transform-origin:0 0;-webkit-text-stroke:0.2px #e8e8e8;">Analyze</div>
<div class="t" id="t34" style="left:485px;top:103px;font-size:9px;font-weight:400;color:#e8e8e8;font-family:'Liberation Sans',sans-serif;transform:scaleX(0.9203);transform-origin:0 0;-webkit-text-stroke:0.2px #e8e8e8;">Data</div>
<div class="t" id="t35" style="left:477px;top:120px;font-size:9px;font-weight:400;color:#e8e8e8;font-family:'Liberation Sans',sans-serif;-webkit-text-stroke:0.2px #e8e8e8;"></div>
<div class="t" id="t36" style="left:523px;top:92px;font-size:9px;font-weight:400;color:#e8e8e8;font-family:'Liberation Sans',sans-serif;letter-spacing:-0.303px;-webkit-text-stroke:0.2px #e8e8e8;">Create</div>
<div class="t" id="t37" style="left:525px;top:103px;font-size:9px;font-weight:400;color:#e8e8e8;font-family:'Liberation Sans',sans-serif;transform:scaleX(0.8426);transform-origin:0 0;-webkit-text-stroke:0.2px #e8e8e8;">a PDF</div>
<div class="t" id="t38" style="left:557px;top:92px;font-size:9px;font-weight:400;color:#e8e8e8;font-family:'Liberation Sans',sans-serif;transform:scaleX(0.8813);transform-origin:0 0;-webkit-text-stroke:0.2px #e8e8e8;">Create a PDF</div>
<div class="t" id="t39" style="left:554px;top:103px;font-size:9px;font-weight:400;color:#e8e8e8;font-family:'Liberation Sans',sans-serif;letter-spacing:-0.311px;-webkit-text-stroke:0.2px #e8e8e8;">and Share link</div>
<div class="t" id="t40" style="left:540px;top:121px;font-size:8.5px;font-weight:400;color:#e8e8e8;font-family:'Liberation Sans',sans-serif;transform:scaleX(0.8966);transform-origin:0 0;-webkit-text-stroke:0.2px #e8e8e8;">Adobe Acrobat</div>
<div class="t" id="t41" style="left:9px;top:143px;font-size:12px;font-weight:400;color:#f0f0f0;font-family:'Liberation Sans',sans-serif;letter-spacing:-0.144px;">C4</div>
<div class="t" id="t42" style="left:132px;top:143px;font-size:12px;font-weight:400;color:#d8d8d8;font-family:'Liberation Serif',sans-serif;letter-spacing:1.828px;"><i>fx</i></div>
<div class="t" id="t43" style="left:167px;top:144px;font-size:12px;font-weight:400;color:#f4f4f4;font-family:'Liberation Mono',sans-serif;letter-spacing:-0.041px;">=LEFTB(&quot;Great Researchers&quot;,4)</div>
<div class="t" id="t44" style="left:55px;top:185px;font-size:13.5px;font-weight:400;color:#e0e0e0;font-family:'Liberation Sans',sans-serif;">A</div>
<div class="t" id="t45" style="left:152px;top:185px;font-size:13.5px;font-weight:400;color:#e0e0e0;font-family:'Liberation Sans',sans-serif;">B</div>
<div class="t" id="t46" style="left:249px;top:185px;font-size:13.5px;font-weight:400;color:#f0f0f0;font-family:'Liberation Sans',sans-serif;">C</div>
<div class="t" id="t47" style="left:314px;top:185px;font-size:13.5px;font-weight:400;color:#e0e0e0;font-family:'Liberation Sans',sans-serif;">D</div>
<div class="t" id="t48" style="left:380px;top:185px;font-size:13.5px;font-weight:400;color:#e0e0e0;font-family:'Liberation Sans',sans-serif;">E</div>
<div class="t" id="t49" style="left:446px;top:185px;font-size:13.5px;font-weight:400;color:#e0e0e0;font-family:'Liberation Sans',sans-serif;">F</div>
<div class="t" id="t50" style="left:511px;top:185px;font-size:13.5px;font-weight:400;color:#e0e0e0;font-family:'Liberation Sans',sans-serif;">G</div>
<div class="t" id="t51" style="left:577px;top:185px;font-size:13.5px;font-weight:400;color:#e0e0e0;font-family:'Liberation Sans',sans-serif;">H</div>
<div class="t" id="t52" style="left:645px;top:185px;font-size:13.5px;font-weight:400;color:#e0e0e0;font-family:'Liberation Sans',sans-serif;">I</div>
<div class="t" id="t53" style="left:9px;top:202px;font-size:13.5px;font-weight:400;color:#e0e0e0;font-family:'Liberation Sans',sans-serif;">1</div>
<div class="t" id="t54" style="left:9px;top:219px;font-size:13.5px;font-weight:400;color:#e0e0e0;font-family:'Liberation Sans',sans-serif;">2</div>
<div class="t" id="t55" style="left:9px;top:235px;font-size:13.5px;font-weight:400;color:#e0e0e0;font-family:'Liberation Sans',sans-serif;">3</div>
<div class="t" id="t56" style="left:9px;top:252px;font-size:13.5px;font-weight:400;color:#e0e0e0;font-family:'Liberation Sans',sans-serif;">4</div>
<div class="t" id="t57" style="left:9px;top:269px;font-size:13.5px;font-weight:400;color:#e0e0e0;font-family:'Liberation Sans',sans-serif;">5</div>
<div class="t" id="t58" style="left:9px;top:286px;font-size:13.5px;font-weight:400;color:#e0e0e0;font-family:'Liberation Sans',sans-serif;">6</div>
<div class="t" id="t59" style="left:9px;top:303px;font-size:13.5px;font-weight:400;color:#e0e0e0;font-family:'Liberation Sans',sans-serif;">7</div>
<div class="t" id="t60" style="left:9px;top:320px;font-size:13.5px;font-weight:400;color:#e0e0e0;font-family:'Liberation Sans',sans-serif;">8</div>
<div class="t" id="t61" style="left:9px;top:337px;font-size:13.5px;font-weight:400;color:#e0e0e0;font-family:'Liberation Sans',sans-serif;">9</div>
<div class="t" id="t62" style="left:5px;top:354px;font-size:13.5px;font-weight:400;color:#e0e0e0;font-family:'Liberation Sans',sans-serif;">10</div>
<div class="t" id="t63" style="left:6px;top:370px;font-size:13.5px;font-weight:400;color:#e0e0e0;font-family:'Liberation Sans',sans-serif;">11</div>
<div class="t" id="t64" style="left:5px;top:387px;font-size:13.5px;font-weight:400;color:#e0e0e0;font-family:'Liberation Sans',sans-serif;">12</div>
<div class="t" id="t65" style="left:5px;top:404px;font-size:13.5px;font-weight:400;color:#e0e0e0;font-family:'Liberation Sans',sans-serif;">13</div>
<div class="t" id="t66" style="left:94px;top:253px;font-size:12px;font-weight:700;color:#0a0a0a;font-family:'Liberation Sans',sans-serif;letter-spacing:-0.025px;">LEFTB fucntion</div>
<div class="t" id="t67" style="left:94px;top:269px;font-size:12px;font-weight:700;color:#0a0a0a;font-family:'Liberation Sans',sans-serif;letter-spacing:-0.005px;">LEFT function</div>
<div class="t" id="t68" style="left:224px;top:253px;font-size:12px;font-weight:700;color:#0a0a0a;font-family:'Liberation Sans',sans-serif;letter-spacing:0.147px;">Grea</div>
<div class="t" id="t69" style="left:86px;top:429px;font-size:10.5px;font-weight:400;color:#e8e8e8;font-family:'Liberation Sans',sans-serif;transform:scaleX(0.8864);transform-origin:0 0;-webkit-text-stroke:0.2px #e8e8e8;">Sheet1</div>
<div class="t" id="t70" style="left:135px;top:426px;font-size:10.5px;font-weight:400;color:#222;font-family:'Liberation Sans',sans-serif;transform:scaleX(0.9014);transform-origin:0 0;-webkit-text-stroke:0.2px #222;">Sheet2</div>
<div class="t" id="t71" style="left:8px;top:448px;font-size:9px;font-weight:400;color:#d8d8d8;font-family:'Liberation Sans',sans-serif;transform:scaleX(0.7803);transform-origin:0 0;-webkit-text-stroke:0.2px #d8d8d8;">Ready</div>
<div class="t" id="t72" style="left:78px;top:448px;font-size:9px;font-weight:700;color:#f0f0f0;font-family:'Liberation Sans',sans-serif;transform:scaleX(0.8368);transform-origin:0 0;-webkit-text-stroke:0.2px #f0f0f0;">Accessibility: Investigate</div>
<div class="t" id="t73" style="left:687px;top:449px;font-size:8.5px;font-weight:400;color:#e0e0e0;font-family:'Liberation Sans',sans-serif;transform:scaleX(0.8736);transform-origin:0 0;-webkit-text-stroke:0.2px #e0e0e0;">100%</div>
</body></html>
